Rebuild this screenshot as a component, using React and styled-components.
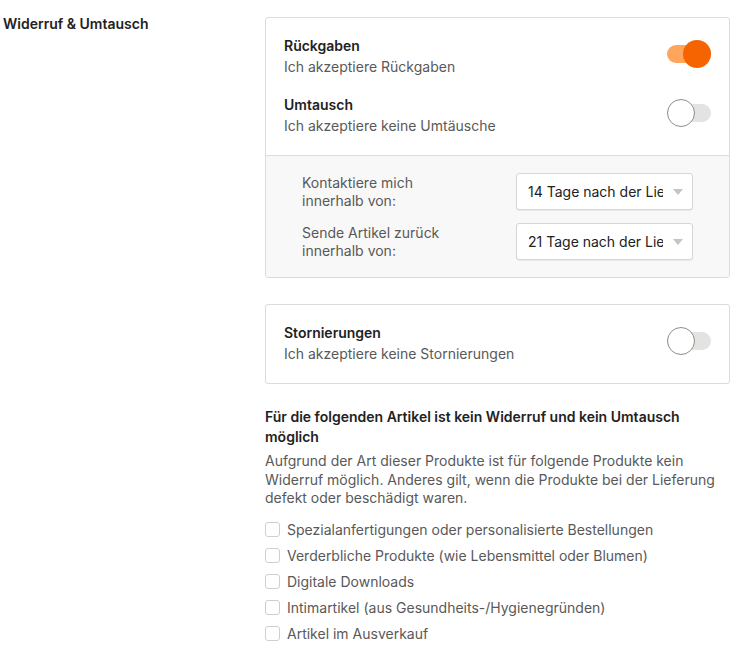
import React from "react";
import styled, { createGlobalStyle } from "styled-components";

const Global = createGlobalStyle`
  html, body { margin: 0; padding: 0; background: #fff; }
  body { font-family: Inter, "Noto Sans", "Liberation Sans", sans-serif; color: #222; font-size: 14px; }
  * { box-sizing: border-box; }
`;

const Page = styled.div`
  display: grid;
  grid-template-columns: 262px 465px;
  padding: 14px 0 0 3px;
`;

const SideLabel = styled.div`
  font-weight: 600;
  font-size: 14px;
  line-height: 20px;
  color: #222;
`;

const Main = styled.div`
  padding-top: 3px;
  display: flex;
  flex-direction: column;
`;

const Card = styled.div`
  border: 1px solid #dcdcdc;
  border-radius: 3px;
  overflow: hidden;
  background: #fff;
  margin-bottom: ${(p) => p.$mb || 0}px;
`;

const ToggleSection = styled.div`
  padding: 18px 18px 18px 18px;
  display: flex;
  flex-direction: column;
  gap: 17px;
`;

const OptionRow = styled.div`
  display: flex;
  align-items: flex-start;
  justify-content: space-between;
`;

const OptionText = styled.div`
  display: flex;
  flex-direction: column;
`;

const OptionTitle = styled.div`
  font-weight: 600;
  line-height: 20px;
  color: #222;
`;

const OptionSub = styled.div`
  line-height: 22px;
  color: #595959;
`;

const Switch = styled.div`
  position: relative;
  width: 44px;
  height: 28px;
  margin-top: 4px;
  flex: none;
`;

const Track = styled.div`
  position: absolute;
  left: 0;
  right: 0;
  top: 5px;
  height: 18px;
  border-radius: 9px;
  background: ${(p) => (p.$on ? "#ffa65c" : "#e3e3e1")};
`;

const Knob = styled.div`
  position: absolute;
  top: 0;
  left: ${(p) => (p.$on ? "16px" : "0")};
  width: 28px;
  height: 28px;
  border-radius: 50%;
  background: ${(p) => (p.$on ? "#f56400" : "#fff")};
  border: ${(p) => (p.$on ? "none" : "1px solid #8d8d8d")};
`;

const GraySection = styled.div`
  background: #f8f8f8;
  border-top: 1px solid #dcdcdc;
  padding: 17px 36px 17px 36px;
  display: flex;
  flex-direction: column;
  gap: 13px;
`;

const SelectRow = styled.div`
  display: grid;
  grid-template-columns: 1fr 177px;
  align-items: center;
`;

const SelectLabel = styled.div`
  line-height: 18px;
  color: #595959;
  width: 150px;
`;

const SelectBox = styled.div`
  height: 37px;
  background: #fff;
  border: 1px solid #d6d6d6;
  border-radius: 3px;
  box-shadow: 0 1px 1px rgba(0,0,0,0.06);
  display: flex;
  align-items: center;
  justify-content: space-between;
  padding: 0 9px 0 11px;
`;

const SelectValue = styled.span`
  width: 135px;
  white-space: nowrap;
  overflow: hidden;
  color: #222;
`;

const Caret = styled.span`
  width: 0;
  height: 0;
  border-left: 5px solid transparent;
  border-right: 5px solid transparent;
  border-top: 6px solid #c4c4c4;
  flex: none;
`;

const Heading = styled.div`
  font-weight: 600;
  line-height: 20px;
  color: #222;
  margin-top: 23px;
  padding-right: 40px;
`;

const Para = styled.p`
  margin: 5px 0 0;
  line-height: 18.5px;
  color: #595959;
`;

const CheckList = styled.div`
  margin-top: 12px;
  display: flex;
  flex-direction: column;
  gap: 6px;
`;

const CheckRow = styled.label`
  display: flex;
  align-items: center;
  gap: 7px;
  height: 20px;
  color: #595959;
  line-height: 20px;
`;

const Box = styled.span`
  width: 15px;
  height: 15px;
  border: 1px solid #cfcfcf;
  border-radius: 3px;
  background: #fff;
  flex: none;
`;

function Toggle({ on }) {
  return (
    <Switch>
      <Track $on={on} />
      <Knob $on={on} />
    </Switch>
  );
}

function Option({ title, sub, on }) {
  return (
    <OptionRow>
      <OptionText>
        <OptionTitle>{title}</OptionTitle>
        <OptionSub>{sub}</OptionSub>
      </OptionText>
      <Toggle on={on} />
    </OptionRow>
  );
}

function Select({ label, value }) {
  return (
    <SelectRow>
      <SelectLabel>{label}</SelectLabel>
      <SelectBox>
        <SelectValue>{value}</SelectValue>
        <Caret />
      </SelectBox>
    </SelectRow>
  );
}

const items = [
  "Spezialanfertigungen oder personalisierte Bestellungen",
  "Verderbliche Produkte (wie Lebensmittel oder Blumen)",
  "Digitale Downloads",
  "Intimartikel (aus Gesundheits-/Hygienegründen)",
  "Artikel im Ausverkauf",
];

export default function App() {
  return (
    <>
      <Global />
      <Page>
        <SideLabel>Widerruf &amp; Umtausch</SideLabel>
        <Main>
          <Card $mb={26}>
            <ToggleSection>
              <Option title="Rückgaben" sub="Ich akzeptiere Rückgaben" on />
              <Option title="Umtausch" sub="Ich akzeptiere keine Umtäusche" />
            </ToggleSection>
            <GraySection>
              <Select label="Kontaktiere mich innerhalb von:" value="14 Tage nach der Lieferung" />
              <Select label="Sende Artikel zurück innerhalb von:" value="21 Tage nach der Lieferung" />
            </GraySection>
          </Card>
          <Card>
            <ToggleSection>
              <Option title="Stornierungen" sub="Ich akzeptiere keine Stornierungen" />
            </ToggleSection>
          </Card>
          <Heading>Für die folgenden Artikel ist kein Widerruf und kein Umtausch möglich</Heading>
          <Para>
            Aufgrund der Art dieser Produkte ist für folgende Produkte kein Widerruf möglich. Anderes gilt, wenn die Produkte bei der Lieferung defekt oder beschädigt waren.
          </Para>
          <CheckList>
            {items.map((t) => (
              <CheckRow key={t}>
                <Box />
                {t}
              </CheckRow>
            ))}
          </CheckList>
        </Main>
      </Page>
    </>
  );
}
